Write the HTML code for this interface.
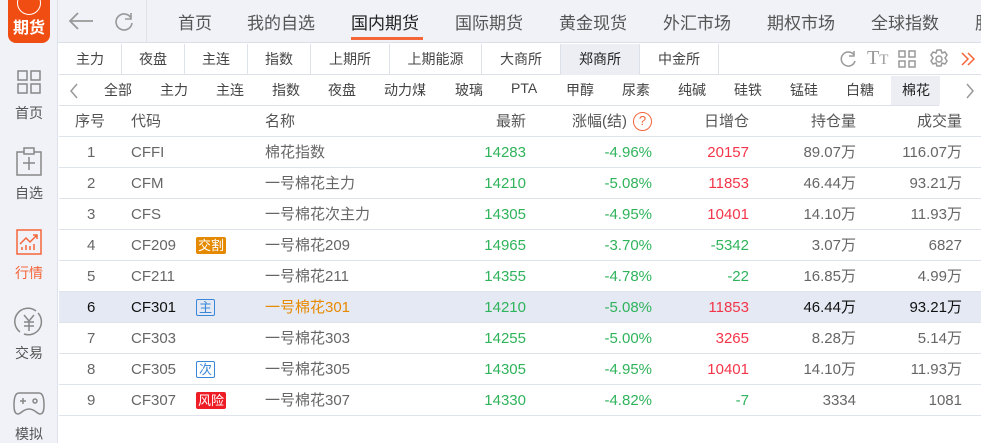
<!DOCTYPE html>
<html><head><meta charset="utf-8"><style>
*{margin:0;padding:0;box-sizing:border-box}
body{width:981px;height:443px;overflow:hidden;background:#fff;font-family:"Liberation Sans","Noto Sans CJK SC",sans-serif;color:#666;position:relative}
.a{position:absolute;white-space:nowrap}
#side{left:0;top:0;width:58px;height:443px;background:#f0f2f7;border-right:1px solid #dde2ea}
#top{left:58px;top:0;width:923px;height:43px;background:#f0f2f7;border-bottom:1px solid #d9dee8}
.nav{top:9px;font-size:17px;color:#555}
.ex{top:44px;height:31px;border-right:1px solid #dde2ea;font-size:14px;text-align:center;line-height:31px;color:#444}
.cat{top:80px;font-size:14px;color:#444}
.row{left:59px;width:922px;height:31px;border-bottom:1px solid #dfe3eb;font-size:15px;line-height:31px}
.row span{position:absolute;white-space:nowrap}
.g{color:#2fb35b}.r{color:#f33549}
.tag{font-size:13px;line-height:17px;top:7px;padding:0 2px;border-radius:2px}
.sl{font-size:14px;color:#555;left:0;width:58px;text-align:center}
</style></head><body>
<div class="a" id="side"></div>
<div class="a" style="left:8px;top:0;width:42px;height:43px;background:#f04d12;border-radius:0 0 8px 8px;color:#fff;font-size:16px;font-weight:bold;text-align:center;line-height:18px;padding-top:20px">期货</div>
<div class="a" style="left:17px;top:-9px;width:24px;height:24px;border:1.5px solid #fff;border-radius:50%"></div>
<svg class="a" style="left:17px;top:70px" width="24" height="24"><g fill="none" stroke="#888" stroke-width="1.5"><rect x="1" y="1" width="9" height="9"/><rect x="14" y="1" width="9" height="9"/><rect x="1" y="14" width="9" height="9"/><rect x="14" y="14" width="9" height="9"/></g></svg>
<div class="a sl" style="top:103px">首页</div>
<svg class="a" style="left:16px;top:147px" width="26" height="30"><g fill="none" stroke="#888" stroke-width="1.5"><rect x="1" y="5" width="24" height="23"/><rect x="8" y="1" width="10" height="6" fill="#f0f2f7"/><path d="M13 10v13M7 16h12"/></g></svg>
<div class="a sl" style="top:183px">自选</div>
<svg class="a" style="left:16px;top:229px" width="26" height="26"><g fill="none" stroke="#f5653a" stroke-width="1.5"><rect x="1" y="1" width="24" height="24"/><path d="M4 15l6-6 4 4 7-7M17 6h4v4"/><path d="M6 21v-3M10 21v-5M14 21v-4M18 21v-6"/></g></svg>
<div class="a sl" style="top:263px;color:#f5653a">行情</div>
<svg class="a" style="left:14px;top:307px" width="30" height="30"><g fill="none" stroke="#888" stroke-width="1.5"><path d="M6 25A13 13 0 0 1 22 4M24 6A13 13 0 0 1 10 27"/><path d="M10 8l5 6 5-6M15 14v10M10 15h10M10 19h10"/></g></svg>
<div class="a sl" style="top:343px">交易</div>
<svg class="a" style="left:13px;top:390px" width="32" height="26"><g fill="none" stroke="#888" stroke-width="1.5"><path d="M6 3h20c4 0 5 6 5 12s-1 9-4 9-5-5-11-5-8 5-11 5-4-3-4-9 1-12 5-12z"/><path d="M7 11h6M10 8v6"/><circle cx="22" cy="11" r="2"/></g></svg>
<div class="a sl" style="top:424px">模拟</div>

<div class="a" id="top"></div>
<svg class="a" style="left:68px;top:11px" width="26" height="20"><path d="M2 10h23M10 2l-8 8 8 8" fill="none" stroke="#999" stroke-width="1.8"/></svg>
<svg class="a" style="left:113px;top:10px" width="22" height="22"><path d="M18 8A8 8 0 1 0 19 13M18 3v6h-6" fill="none" stroke="#999" stroke-width="1.6"/></svg>
<div class="a" style="left:146px;top:0;width:1px;height:43px;background:#dde2ea"></div>
<div class="a nav" style="left:178px">首页</div>
<div class="a nav" style="left:247px">我的自选</div>
<div class="a nav" style="left:351px;color:#222">国内期货</div>
<div class="a" style="left:351px;top:37px;width:72px;height:3px;background:#f5653a"></div>
<div class="a nav" style="left:455px">国际期货</div>
<div class="a nav" style="left:559px">黄金现货</div>
<div class="a nav" style="left:663px">外汇市场</div>
<div class="a nav" style="left:767px">期权市场</div>
<div class="a nav" style="left:871px">全球指数</div>
<div class="a nav" style="left:975px">股</div>

<div class="a" style="left:59px;top:74px;width:922px;height:1px;background:#dde2ea"></div>
<div class="a ex" style="left:59px;width:63px">主力</div>
<div class="a ex" style="left:122px;width:63px">夜盘</div>
<div class="a ex" style="left:185px;width:63px">主连</div>
<div class="a ex" style="left:248px;width:63px">指数</div>
<div class="a ex" style="left:311px;width:79px">上期所</div>
<div class="a ex" style="left:390px;width:92px">上期能源</div>
<div class="a ex" style="left:482px;width:79px">大商所</div>
<div class="a ex" style="left:561px;width:79px;background:#eceef4;color:#222">郑商所</div>
<div class="a ex" style="left:640px;width:79px">中金所</div>
<svg class="a" style="left:837px;top:49px" width="22" height="20"><path d="M17 6A7 7 0 1 0 18 12M17 2v5h-5" fill="none" stroke="#999" stroke-width="1.5"/></svg>
<div class="a" style="left:867px;top:47px;font-family:'Liberation Serif',serif;font-size:20px;color:#999">T<span style="font-size:15px">T</span></div>
<svg class="a" style="left:898px;top:50px" width="20" height="18"><g fill="none" stroke="#999" stroke-width="1.5"><rect x="1" y="1" width="6" height="6"/><rect x="11" y="1" width="6" height="6"/><rect x="1" y="11" width="6" height="6"/><rect x="11" y="11" width="6" height="6"/></g></svg>
<svg class="a" style="left:928px;top:48px" width="22" height="22"><g fill="none" stroke="#999" stroke-width="1.5"><circle cx="11" cy="11" r="3"/><path d="M9 2h4l1 3 3-1 2 3-2 3 2 3-2 3-3-1-1 3H9l-1-3-3 1-2-3 2-3-2-3 2-3 3 1z"/></g></svg>
<svg class="a" style="left:960px;top:51px" width="16" height="16"><path d="M2 2l6 6-6 6M8 2l6 6-6 6" fill="none" stroke="#f5653a" stroke-width="1.5"/></svg>

<div class="a" style="left:59px;top:105px;width:880px;height:1px;background:#dde2ea"></div>
<svg class="a" style="left:68px;top:82px" width="12" height="18"><path d="M9 2L3 9l6 7" fill="none" stroke="#999" stroke-width="1.5"/></svg>
<div class="a" style="left:891px;top:76px;width:49px;height:29px;background:#eceef4"></div>
<div class="a cat" style="left:104px">全部</div><div class="a cat" style="left:160px">主力</div><div class="a cat" style="left:216px">主连</div><div class="a cat" style="left:272px">指数</div><div class="a cat" style="left:328px">夜盘</div><div class="a cat" style="left:384px">动力煤</div><div class="a cat" style="left:455px">玻璃</div><div class="a cat" style="left:511px">PTA</div><div class="a cat" style="left:566px">甲醇</div><div class="a cat" style="left:622px">尿素</div><div class="a cat" style="left:678px">纯碱</div><div class="a cat" style="left:734px">硅铁</div><div class="a cat" style="left:790px">锰硅</div><div class="a cat" style="left:846px">白糖</div><div class="a cat" style="left:902px;color:#222">棉花</div>
<svg class="a" style="left:964px;top:82px" width="12" height="18"><path d="M3 2l6 7-6 7" fill="none" stroke="#999" stroke-width="1.5"/></svg>

<div class="a row" style="top:106px;color:#555;font-size:15px">
<span style="left:16px">序号</span><span style="left:72px">代码</span><span style="left:206px">名称</span><span style="right:455px">最新</span><span style="right:354px">涨幅(结)</span><span style="left:574px;top:6px;width:19px;height:19px;border:1.5px solid #f5653a;border-radius:50%;color:#f5653a;font-size:13px;line-height:16px;text-align:center">?</span><span style="right:232px">日增仓</span><span style="right:125px">持仓量</span><span style="right:19px">成交量</span></div>

<div class="a row" style="top:137px"><span style="left:28px">1</span><span style="left:72px">CFFI</span><span style="left:206px">棉花指数</span><span class="g" style="right:455px">14283</span><span class="g" style="right:329px">-4.96%</span><span class="r" style="right:232px">20157</span><span style="right:125px">89.07万</span><span style="right:19px">116.07万</span></div>
<div class="a row" style="top:168px"><span style="left:28px">2</span><span style="left:72px">CFM</span><span style="left:206px">一号棉花主力</span><span class="g" style="right:455px">14210</span><span class="g" style="right:329px">-5.08%</span><span class="r" style="right:232px">11853</span><span style="right:125px">46.44万</span><span style="right:19px">93.21万</span></div>
<div class="a row" style="top:199px"><span style="left:28px">3</span><span style="left:72px">CFS</span><span style="left:206px">一号棉花次主力</span><span class="g" style="right:455px">14305</span><span class="g" style="right:329px">-4.95%</span><span class="r" style="right:232px">10401</span><span style="right:125px">14.10万</span><span style="right:19px">11.93万</span></div>
<div class="a row" style="top:230px"><span style="left:28px">4</span><span style="left:72px">CF209</span><span class="tag" style="left:137px;background:#e58a00;color:#fff">交割</span><span style="left:206px">一号棉花209</span><span class="g" style="right:455px">14965</span><span class="g" style="right:329px">-3.70%</span><span class="g" style="right:232px">-5342</span><span style="right:125px">3.07万</span><span style="right:19px">6827</span></div>
<div class="a row" style="top:261px"><span style="left:28px">5</span><span style="left:72px">CF211</span><span style="left:206px">一号棉花211</span><span class="g" style="right:455px">14355</span><span class="g" style="right:329px">-4.78%</span><span class="g" style="right:232px">-22</span><span style="right:125px">16.85万</span><span style="right:19px">4.99万</span></div>
<div class="a row" style="top:292px;background:#e4e9f3;color:#111"><span style="left:28px">6</span><span style="left:72px">CF301</span><span class="tag" style="left:137px;border:1px solid #3a86d8;color:#3a86d8;line-height:15px">主</span><span style="left:206px;color:#e88a00">一号棉花301</span><span class="g" style="right:455px">14210</span><span class="g" style="right:329px">-5.08%</span><span class="r" style="right:232px">11853</span><span style="right:125px">46.44万</span><span style="right:19px">93.21万</span></div>
<div class="a row" style="top:323px"><span style="left:28px">7</span><span style="left:72px">CF303</span><span style="left:206px">一号棉花303</span><span class="g" style="right:455px">14255</span><span class="g" style="right:329px">-5.00%</span><span class="r" style="right:232px">3265</span><span style="right:125px">8.28万</span><span style="right:19px">5.14万</span></div>
<div class="a row" style="top:354px"><span style="left:28px">8</span><span style="left:72px">CF305</span><span class="tag" style="left:137px;border:1px solid #3a86d8;color:#3a86d8;line-height:15px">次</span><span style="left:206px">一号棉花305</span><span class="g" style="right:455px">14305</span><span class="g" style="right:329px">-4.95%</span><span class="r" style="right:232px">10401</span><span style="right:125px">14.10万</span><span style="right:19px">11.93万</span></div>
<div class="a row" style="top:385px"><span style="left:28px">9</span><span style="left:72px">CF307</span><span class="tag" style="left:137px;background:#ee1c25;color:#fff">风险</span><span style="left:206px">一号棉花307</span><span class="g" style="right:455px">14330</span><span class="g" style="right:329px">-4.82%</span><span class="g" style="right:232px">-7</span><span style="right:125px">3334</span><span style="right:19px">1081</span></div>
</body></html>
